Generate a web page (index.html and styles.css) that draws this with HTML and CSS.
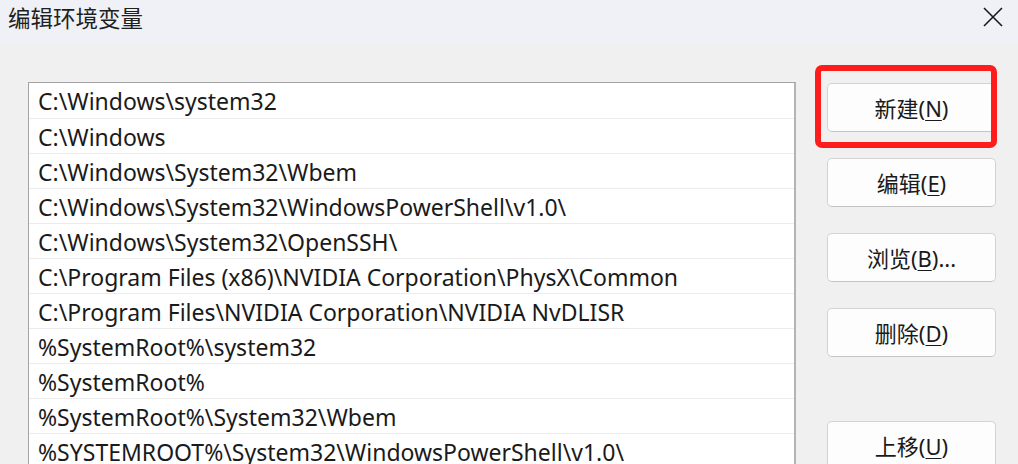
FILE: index.html
```html
<!DOCTYPE html>
<html lang="zh-CN">
<head>
<meta charset="utf-8">
<title>编辑环境变量</title>
<link rel="stylesheet" href="styles.css">
</head>
<body>
<div class="dialog">
  <header class="titlebar">
    <span class="title">编辑环境变量</span>
    <button class="close" aria-label="关闭">
      <svg width="20" height="20" viewBox="0 0 20 20"><path d="M1 1 L19 19 M19 1 L1 19" stroke="#1a1a1a" stroke-width="1.6" fill="none"/></svg>
    </button>
  </header>
  <main class="content">
    <ul class="pathlist">
      <li>C:\Windows\system32</li>
      <li>C:\Windows</li>
      <li>C:\Windows\System32\Wbem</li>
      <li>C:\Windows\System32\WindowsPowerShell\v1.0\</li>
      <li>C:\Windows\System32\OpenSSH\</li>
      <li>C:\Program Files (x86)\NVIDIA Corporation\PhysX\Common</li>
      <li>C:\Program Files\NVIDIA Corporation\NVIDIA NvDLISR</li>
      <li>%SystemRoot%\system32</li>
      <li>%SystemRoot%</li>
      <li>%SystemRoot%\System32\Wbem</li>
      <li>%SYSTEMROOT%\System32\WindowsPowerShell\v1.0\</li>
    </ul>
    <div class="actions">
      <div class="highlight-wrap">
        <button class="btn">新建(<u>N</u>)</button>
        <span class="highlight"></span>
      </div>
      <button class="btn">编辑(<u>E</u>)</button>
      <button class="btn">浏览(<u>B</u>)...</button>
      <button class="btn">删除(<u>D</u>)</button>
      <button class="btn btn-sep">上移(<u>U</u>)</button>
    </div>
  </main>
</div>
</body>
</html>
```

FILE: styles.css
```css
html, body {
  margin: 0;
  padding: 0;
  height: 100%;
  overflow: hidden;
  background: #f0f0f0;
}

.dialog {
  font-family: "Noto Sans", "Noto Sans CJK SC", sans-serif;
  color: #1a1a1a;
}

.titlebar {
  height: 44px;
  background: #eff1f6;
  display: flex;
  justify-content: space-between;
  align-items: flex-start;
  box-sizing: border-box;
}

.title {
  font-family: "Noto Sans CJK SC", sans-serif;
  font-size: 22.5px;
  line-height: 34px;
  padding-left: 8px;
  color: #1f1f1f;
}

.close {
  border: 0;
  background: transparent;
  padding: 0;
  margin: 7px 15px 0 0;
  width: 20px;
  height: 20px;
  display: flex;
}

.content {
  display: flex;
  align-items: flex-start;
  padding: 38px 0 0 28px;
}

.pathlist {
  list-style: none;
  margin: 0;
  padding: 0;
  width: 768px;
  background: #ffffff;
  border: 1px solid #a3a3a3;
  border-right-width: 2px;
  border-right-color: #b4b4b4;
  box-sizing: border-box;
}

.pathlist li {
  height: 35px;
  box-sizing: border-box;
  border-top: 1px solid #ececec;
  padding: 1px 0 0 9px;
  font-size: 23px;
  line-height: 34px;
  white-space: nowrap;
  color: #1a1a1a;
}

.pathlist li:first-child {
  border-top: 0;
}

.actions {
  margin-left: 31px;
  margin-top: 1px;
  display: flex;
  flex-direction: column;
  gap: 26px;
}

.highlight-wrap {
  position: relative;
  display: flex;
}

.btn {
  width: 169px;
  height: 49px;
  background: #fdfdfd;
  border: 1px solid #d3d3d3;
  border-bottom-color: #c4c4c4;
  border-radius: 5px;
  font-family: "Noto Sans", "Noto Sans CJK SC", sans-serif;
  font-size: 22px;
  color: #1a1a1a;
  padding: 0;
  line-height: 1;
}

.btn u {
  text-underline-offset: 3px;
  text-decoration-thickness: 1px;
}

.btn-sep {
  margin-top: 38px;
}

.highlight {
  position: absolute;
  left: -12px;
  top: -18px;
  width: 182px;
  height: 83px;
  border: 6px solid #ff1c1c;
  border-radius: 7px;
  box-sizing: border-box;
  pointer-events: none;
}
```
